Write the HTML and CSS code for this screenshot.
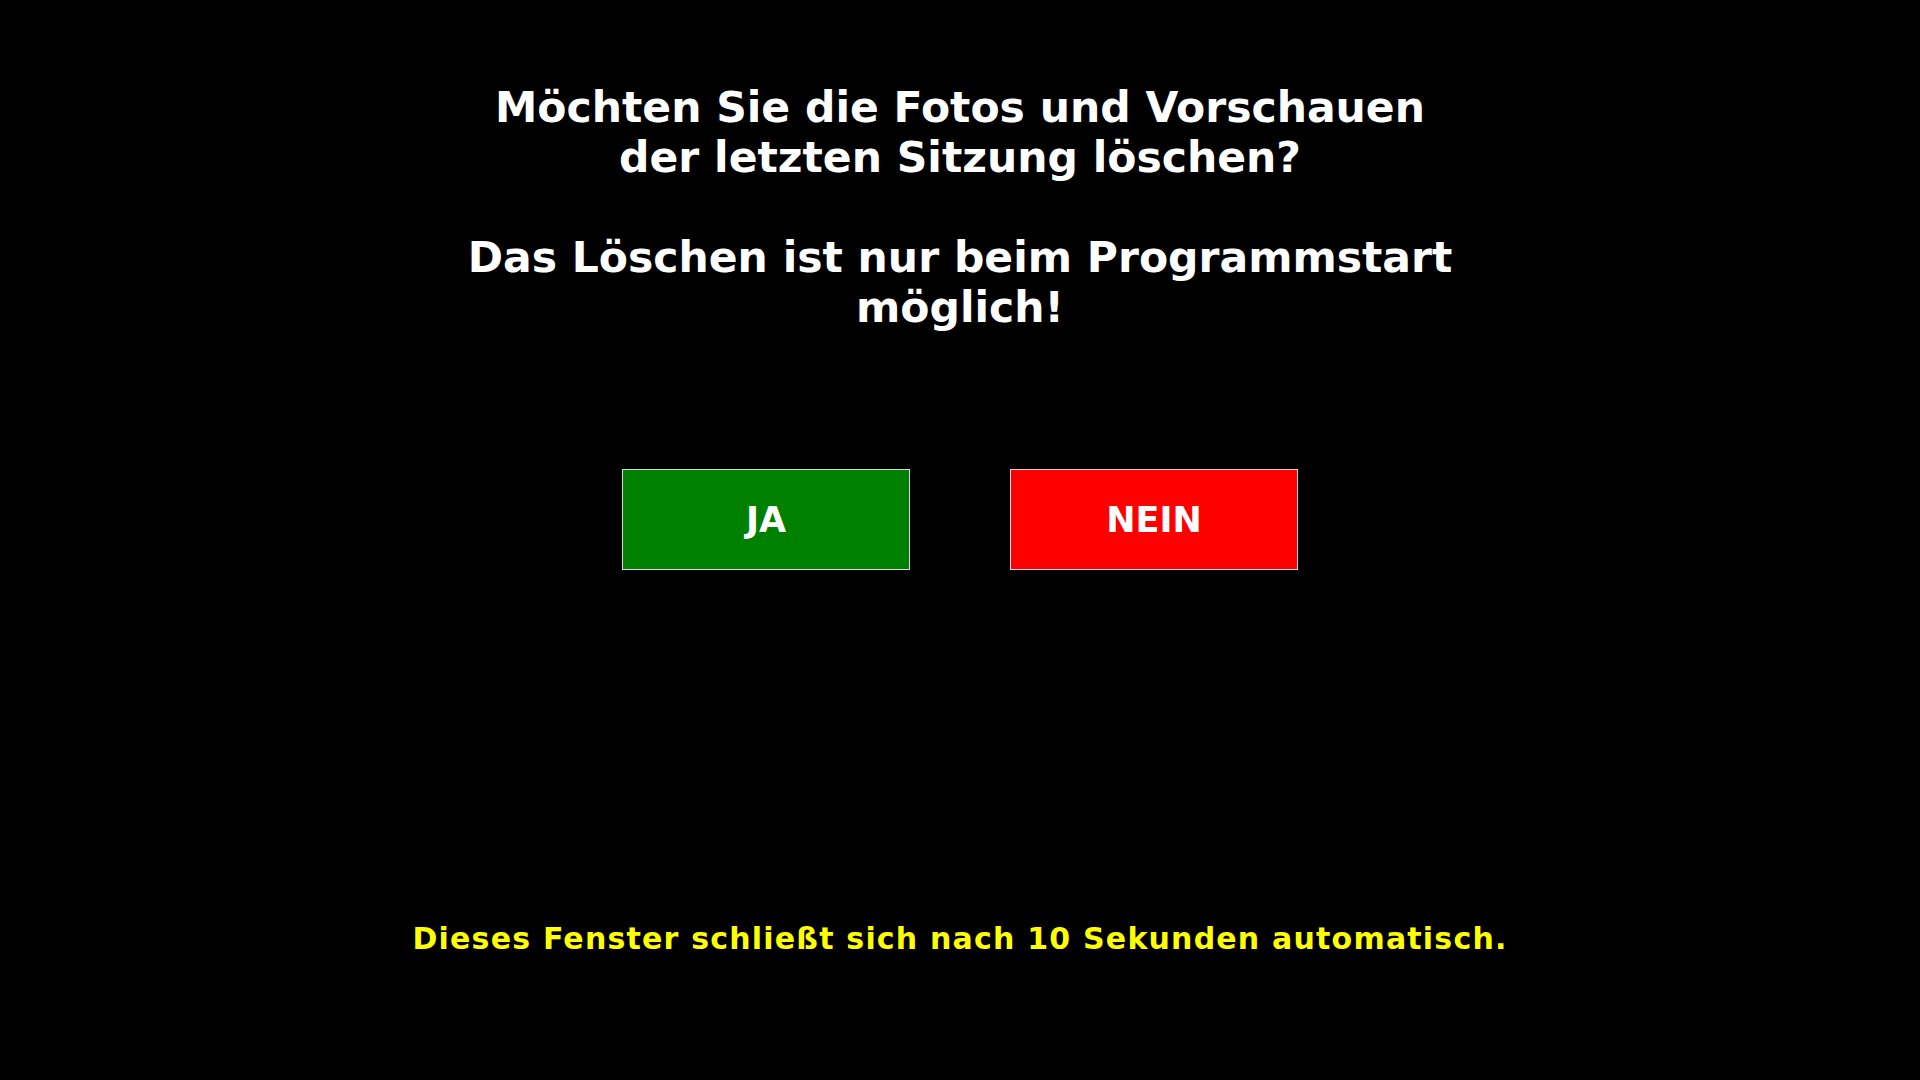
FILE: index.html
```html
<!DOCTYPE html>
<html lang="de">
<head>
<meta charset="utf-8">
<title>Sitzung löschen</title>
<link rel="stylesheet" href="styles.css">
</head>
<body>
<main class="screen">
  <div class="message">
    <p class="line">Möchten Sie die Fotos und Vorschauen</p>
    <p class="line">der letzten Sitzung löschen?</p>
    <p class="line blank">&nbsp;</p>
    <p class="line">Das Löschen ist nur beim Programmstart</p>
    <p class="line">möglich!</p>
  </div>
  <div class="buttons">
    <button class="btn btn-yes" type="button">JA</button>
    <button class="btn btn-no" type="button">NEIN</button>
  </div>
  <p class="footer">Dieses Fenster schließt sich nach 10 Sekunden automatisch.</p>
</main>
</body>
</html>
```
FILE: styles.css
```css
html, body {
  margin: 0;
  padding: 0;
  background: #000;
  width: 1920px;
  height: 1080px;
  overflow: hidden;
}
.screen {
  display: flex;
  flex-direction: column;
  align-items: center;
  font-family: "DejaVu Sans", sans-serif;
  font-weight: bold;
  color: #fff;
  padding-top: 83px;
  box-sizing: border-box;
  height: 1080px;
}
.message {
  text-align: center;
  font-size: 42.5px;
  line-height: 50px;
}
.line {
  margin: 0;
}
.buttons {
  display: flex;
  gap: 100px;
  margin-top: 136px;
}
.btn {
  width: 288px;
  height: 101px;
  box-sizing: border-box;
  border: 1px solid #d8d8d8;
  font-family: "DejaVu Sans", sans-serif;
  font-weight: bold;
  font-size: 35px;
  color: #fff;
  padding: 0;
  margin: 0;
  display: flex;
  align-items: center;
  justify-content: center;
}
.btn-yes {
  background: #008000;
}
.btn-no {
  background: #ff0000;
}
.footer {
  margin: 351px 0 0;
  color: #ffff00;
  font-size: 30px;
  line-height: 35px;
  letter-spacing: 1.2px;
}
```
